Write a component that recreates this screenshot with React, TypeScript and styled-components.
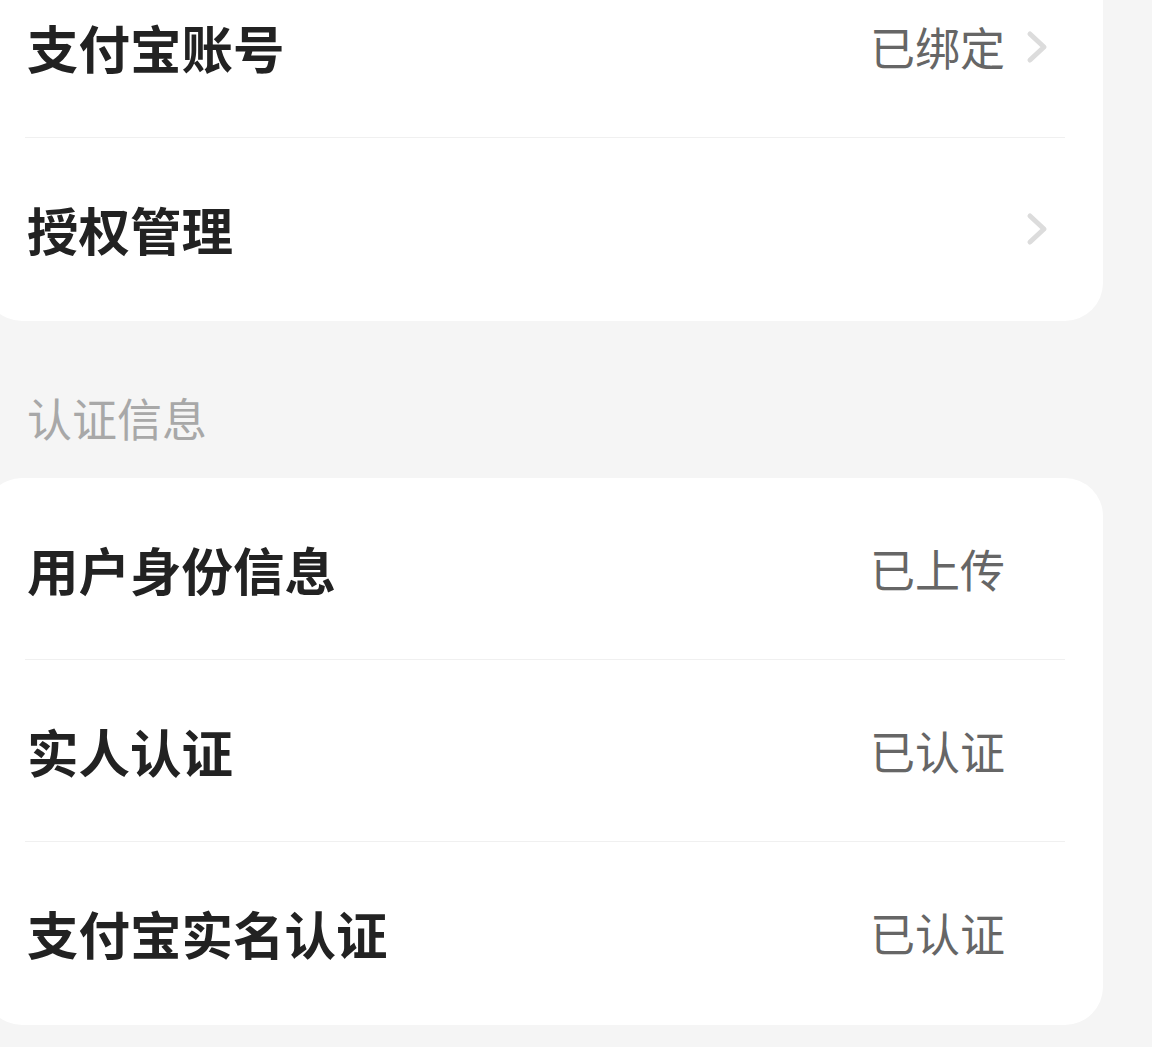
import styled, { createGlobalStyle } from "styled-components";

const GlobalStyle = createGlobalStyle`
  html, body {
    margin: 0;
    padding: 0;
    background: #f5f5f5;
    overflow: hidden;
  }
  body {
    font-family: "Noto Sans CJK SC", "Noto Sans", sans-serif;
  }
`;

const Page = styled.div`
  min-height: 100vh;
  background: #f5f5f5;
  padding-right: 49px;
`;

const Card = styled.div<{ $offsetTop?: number }>`
  background: #ffffff;
  border-radius: 38px;
  margin-left: -16px;
  margin-top: ${(p) => p.$offsetTop ?? 0}px;
  padding-bottom: 2px;
  display: flex;
  flex-direction: column;
`;

const Row = styled.div`
  height: 181px;
  display: flex;
  align-items: center;
  padding: 0 52px 0 43px;
`;

const Label = styled.div`
  flex: 1;
  font-size: 51.5px;
  font-weight: 700;
  color: #222222;
  line-height: 1;
`;

const Value = styled.div`
  font-size: 45px;
  font-weight: 400;
  color: #666666;
  line-height: 1;
`;

const ArrowSlot = styled.div<{ $visible: boolean }>`
  width: 28px;
  margin-left: 18px;
  display: flex;
  align-items: center;
  justify-content: center;
  visibility: ${(p) => (p.$visible ? "visible" : "hidden")};
`;

const Divider = styled.div`
  height: 1px;
  background: #f0f0f0;
  margin: 0 38px 0 41px;
`;

const SectionTitle = styled.div`
  padding: 75px 0 38px 27px;
  font-size: 45px;
  line-height: 44px;
  color: #a8a8a8;
`;

type Item = {
  label: string;
  value?: string;
  arrow?: boolean;
};

const accountItems: Item[] = [
  { label: "支付宝账号", value: "已绑定", arrow: true },
  { label: "授权管理", arrow: true },
];

const authItems: Item[] = [
  { label: "用户身份信息", value: "已上传" },
  { label: "实人认证", value: "已认证" },
  { label: "支付宝实名认证", value: "已认证" },
];

function Chevron() {
  return (
    <svg width="26" height="34" viewBox="0 0 26 34" fill="none">
      <path
        d="M6 4 L20 17 L6 30"
        stroke="#dcdcdc"
        strokeWidth="5"
        strokeLinecap="round"
        strokeLinejoin="round"
      />
    </svg>
  );
}

function ItemList({ items }: { items: Item[] }) {
  return (
    <>
      {items.map((item, i) => (
        <div key={item.label}>
          {i > 0 && <Divider />}
          <Row>
            <Label>{item.label}</Label>
            {item.value && <Value>{item.value}</Value>}
            <ArrowSlot $visible={!!item.arrow}>
              <Chevron />
            </ArrowSlot>
          </Row>
        </div>
      ))}
    </>
  );
}

export default function App() {
  return (
    <Page>
      <GlobalStyle />
      <Card $offsetTop={-44}>
        <ItemList items={accountItems} />
      </Card>
      <SectionTitle>认证信息</SectionTitle>
      <Card>
        <ItemList items={authItems} />
      </Card>
    </Page>
  );
}
